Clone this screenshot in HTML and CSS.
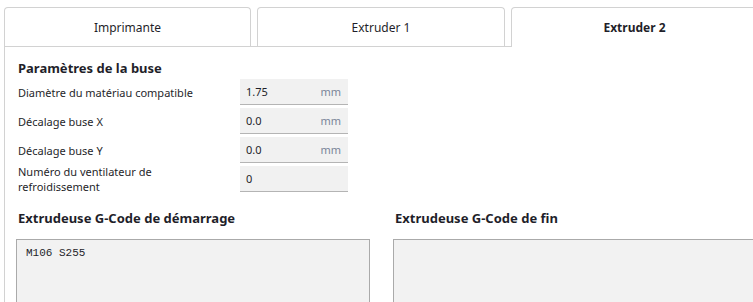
FILE: index.html
```html
<!DOCTYPE html>
<html lang="fr">
<head>
  <meta charset="utf-8" />
  <title>Paramètres de la machine</title>
  <link rel="stylesheet" href="styles.css">
</head>

<body>
  <div class="page">
    <div class="tabs">
      <div class="tab">Imprimante</div>
      <div class="tab">Extruder 1</div>
      <div class="tab active">Extruder 2</div>
    </div>

    <div class="panel">
      <h2 class="section-title">Paramètres de la buse</h2>

      <div class="settings">
        <div class="row">
          <label>Diamètre du matériau compatible</label>
          <div class="field"><span>1.75</span><span class="unit">mm</span></div>
        </div>
        <div class="row">
          <label>Décalage buse X</label>
          <div class="field"><span>0.0</span><span class="unit">mm</span></div>
        </div>
        <div class="row">
          <label>Décalage buse Y</label>
          <div class="field"><span>0.0</span><span class="unit">mm</span></div>
        </div>
        <div class="row">
          <label>Numéro du ventilateur de<br>refroidissement</label>
          <div class="field"><span>0</span></div>
        </div>
      </div>

      <div class="gcode">
        <div class="gcode-col">
          <h2 class="section-title">Extrudeuse G-Code de démarrage</h2>
          <div class="code-box">M106 S255</div>
        </div>
        <div class="gcode-col">
          <h2 class="section-title">Extrudeuse G-Code de fin</h2>
          <div class="code-box"></div>
        </div>
      </div>
    </div>
  </div>
</body>
</html>
```

FILE: styles.css
```css
body {
  margin: 0;
  background: #ffffff;
  font-family: "Noto Sans", "Open Sans", sans-serif;
  color: #1f1f2a;
}

.page {
  width: 753px;
  height: 302px;
  overflow: hidden;
}

.tabs {
  display: flex;
  gap: 6px;
  margin-left: 4px;
  padding-top: 7px;
  border-bottom: 1px solid #d2d2d2;
}

.tab {
  flex: none;
  width: 245px;
  height: 38px;
  margin-bottom: -1px;
  border: 1px solid #d2d2d2;
  border-bottom: none;
  border-radius: 4px 4px 0 0;
  display: flex;
  justify-content: center;
  align-items: center;
  font-size: 12px;
  background: #ffffff;
}

.tab:nth-child(2) {
  width: 246px;
}

.tab.active {
  font-weight: bold;
  height: 39px;
}

.panel {
  margin-left: 4px;
  border-left: 1px solid #d2d2d2;
  padding: 12px 0 0 11px;
  height: 243px;
}

.section-title {
  margin: 0 0 0 2px;
  font-size: 13px;
  font-weight: bold;
  line-height: 18px;
}

.settings {
  display: flex;
  flex-direction: column;
  gap: 3px;
  margin-top: 2px;
}

.row {
  display: flex;
  align-items: center;
  height: 26px;
}

.row label {
  width: 222px;
  padding-left: 2px;
  font-size: 11px;
  line-height: 15px;
}

.field {
  width: 95px;
  height: 25px;
  padding: 0 7px 0 6px;
  background: #f1f1f1;
  border-bottom: 1px solid #b4b4b4;
  display: flex;
  justify-content: space-between;
  align-items: center;
  font-size: 11px;
}

.field .unit {
  color: #7a8598;
}

.gcode {
  display: flex;
  gap: 23px;
  margin-top: 17px;
}

.gcode-col {
  flex: none;
  width: 354px;
}

.gcode-col:last-child {
  width: 380px;
}

.code-box {
  margin-top: 12px;
  height: 80px;
  border: 1px solid #aaaaaa;
  background: #f2f2f2;
  padding: 7px 9px;
  font-family: "Liberation Mono", monospace;
  font-size: 11px;
}
```
